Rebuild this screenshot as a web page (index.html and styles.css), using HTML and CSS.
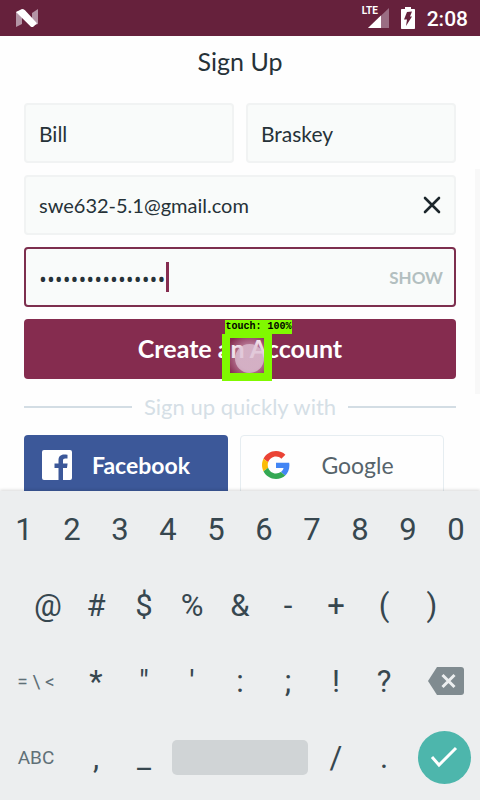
FILE: index.html
```html
<!DOCTYPE html>
<html lang="en">
<head>
<meta charset="utf-8">
<meta name="viewport" content="width=device-width, initial-scale=1">
<title>Sign Up</title>
<link rel="stylesheet" href="styles.css">
</head>
<body>
<header class="status-bar">
  <svg class="status-logo" width="22" height="18" viewBox="0 0 22 18" aria-hidden="true">
    <path fill="#b394a5" d="M0 3l6-2v14l-6 3zM16 4l6-4v15l-6 2z"/>
    <path fill="#fff" d="M0 3l6-3c1 0 2 .4 3 1.200l12 13-4 3.800c-1 .3-2 0-2.600-.8z"/>
  </svg>
  <div class="status-icons">
    <span class="signal">
      <span class="network">LTE</span>
      <svg width="21" height="20" viewBox="0 0 21 20" aria-hidden="true">
        <path fill="#9a6d83" d="M21 0v20H0z"/>
        <path fill="#fff" d="M13 7.600V20H0z"/>
      </svg>
    </span>
    <svg width="14" height="22" viewBox="0 0 14 22" aria-hidden="true">
      <path fill="#fff" d="M4 0h6v2h3c.6 0 1 .4 1 1v18c0 .6-.4 1-1 1H1c-.6 0-1-.4-1-1V3c0-.6.4-1 1-1h3z"/>
      <path fill="#66213c" d="M6 5l5-.500-2 5h2L5 19l1-6.500H3z"/>
    </svg>
    <span class="clock">2:08</span>
  </div>
</header>

<main class="content">
  <h1 class="title">Sign Up</h1>
  <form class="form">
    <div class="name-row">
      <input class="field" type="text" aria-label="First name" value="Bill">
      <input class="field" type="text" aria-label="Last name" value="Braskey">
    </div>
    <div class="field field-group">
      <input class="field-input" type="text" aria-label="Email" value="swe632-5.1@gmail.com">
      <button class="clear" type="button" aria-label="Clear email">
        <svg width="18" height="18" viewBox="0 0 18 18"><path d="M2 2l14 14M16 2L2 16" stroke="#1c262b" stroke-width="2.600" stroke-linecap="round"/></svg>
      </button>
    </div>
    <div class="field field-group is-focused">
      <input class="field-input password" type="password" aria-label="Password" value="abcdefghijklmnop">
      <span class="caret"></span>
      <button class="show" type="button">SHOW</button>
    </div>
    <button class="submit" type="button">Create an Account
      <span class="touch">
        <span class="touch-label">touch: 100%</span>
        <span class="touch-box"><span class="touch-dot"></span></span>
      </span>
    </button>
  </form>
  <div class="divider">Sign up quickly with</div>
  <div class="social">
    <button class="social-button facebook" type="button">
      <svg width="30" height="30" viewBox="0 0 30 30" aria-hidden="true">
        <path fill="#fff" d="M2 0h26a2 2 0 0 1 2 2v26a2 2 0 0 1-2 2h-7V18h4l.6-4.500H21v-3c0-1.300.6-2 2.200-2H25.500V4.800c-.7-.1-2-.2-3.300-.2-3.700 0-5.700 2.200-5.700 5.700v3.200h-4V18h4v12H2a2 2 0 0 1-2-2V2a2 2 0 0 1 2-2z"/>
      </svg>
      <span class="social-name">Facebook</span>
    </button>
    <button class="social-button google" type="button">
      <svg width="28" height="28" viewBox="0 0 48 48" aria-hidden="true">
        <path fill="#ea4335" d="M24 9.500c3.540 0 6.710 1.220 9.210 3.600l6.850-6.850C35.900 2.380 30.470 0 24 0 14.620 0 6.510 5.380 2.560 13.220l7.980 6.190C12.430 13.720 17.740 9.500 24 9.500z"/>
        <path fill="#4285f4" d="M46.980 24.550c0-1.570-.15-3.090-.38-4.550H24v9.020h12.940c-.58 2.960-2.260 5.480-4.780 7.180l7.730 6c4.510-4.180 7.090-10.360 7.090-17.650z"/>
        <path fill="#fbbc05" d="M10.530 28.590c-.48-1.450-.76-2.990-.76-4.590s.27-3.140.76-4.590l-7.980-6.190C.92 16.460 0 20.120 0 24s.92 7.540 2.560 10.780l7.970-6.190z"/>
        <path fill="#34a853" d="M24 48c6.480 0 11.930-2.130 15.890-5.810l-7.730-6c-2.150 1.450-4.920 2.300-8.160 2.300-6.260 0-11.570-4.220-13.470-9.910l-7.980 6.190C6.510 42.620 14.620 48 24 48z"/>
      </svg>
      <span class="social-name">Google</span>
    </button>
  </div>
  <span class="scrollbar"></span>
</main>

<section class="keyboard" aria-label="Keyboard">
  <div class="key-row">
    <button class="key">1</button><button class="key">2</button><button class="key">3</button><button class="key">4</button><button class="key">5</button><button class="key">6</button><button class="key">7</button><button class="key">8</button><button class="key">9</button><button class="key">0</button>
  </div>
  <div class="key-row inset">
    <button class="key">@</button><button class="key">#</button><button class="key">$</button><button class="key">%</button><button class="key">&amp;</button><button class="key">-</button><button class="key">+</button><button class="key">(</button><button class="key">)</button>
  </div>
  <div class="key-row">
    <button class="key wide">= \ &lt;</button><button class="key">*</button><button class="key">"</button><button class="key">'</button><button class="key">:</button><button class="key">;</button><button class="key">!</button><button class="key">?</button>
    <button class="key wide" aria-label="Backspace">
      <svg class="backspace" width="36" height="28" viewBox="0 0 36 28"><path fill="#808b90" d="M9 0h24a3 3 0 0 1 3 3v22a3 3 0 0 1-3 3H9L0 14z"/><path d="M14.500 8l12 12M26.500 8l-12 12" stroke="#eceeef" stroke-width="3"/></svg>
    </button>
  </div>
  <div class="key-row">
    <button class="key wide">ABC</button><button class="key">,</button><button class="key">_</button>
    <button class="key space" aria-label="Space"><span class="space-bar"></span></button>
    <button class="key">/</button><button class="key">.</button>
    <button class="key wide" aria-label="Done"><span class="done"><svg width="28" height="22" viewBox="0 0 28 22"><path d="M2 11l7 8L26 2" fill="none" stroke="#fff" stroke-width="3"/></svg></span></button>
  </div>
</section>
</body>
</html>
```
FILE: styles.css
```css
* {
  box-sizing: border-box;
}

body {
  margin: 0;
  height: 100vh;
  display: flex;
  flex-direction: column;
  background: #fefefe;
  color: #263238;
  font-family: Lato, "Liberation Sans", sans-serif;
}

button,
input {
  margin: 0;
  padding: 0;
  border: 0;
  background: none;
  color: inherit;
  font: inherit;
}

svg {
  display: block;
  flex: none;
}

/* Status bar */
.status-bar {
  flex: none;
  height: 36px;
  padding: 0 12px 0 16px;
  display: flex;
  align-items: center;
  justify-content: space-between;
  background: #66213c;
  color: #fff;
}

.status-icons {
  display: flex;
  align-items: center;
  gap: 12px;
}

.signal {
  position: relative;
  padding-left: 6px;
}

.network {
  position: absolute;
  left: 0;
  top: -2px;
  font: 700 10px/10px "Liberation Sans Narrow", Roboto, sans-serif;
}

.clock {
  padding-top: 2px;
  font: 500 21px/36px Roboto, sans-serif;
}

/* Form */
.content {
  position: relative;
  flex: 1;
  min-height: 0;
  overflow: hidden;
  padding: 0 24px;
}

.title {
  margin: 0;
  padding: 9px 0 26px;
  font-size: 25px;
  line-height: 32px;
  font-weight: 400;
  text-align: center;
}

.form {
  display: flex;
  flex-direction: column;
  gap: 12px;
}

.name-row {
  display: flex;
  gap: 12px;
}

.field {
  flex: 1 1 0;
  min-width: 0;
  height: 60px;
  padding: 0 13px;
  border: 2px solid #f1f3f3;
  border-radius: 4px;
  background: #f9fbfa;
  font-size: 21px;
}

.field-group {
  position: relative;
  flex: none;
  display: flex;
  align-items: center;
  font-size: 20px;
}

.is-focused {
  border-color: #7d2f4e;
}

.field-input {
  flex: 1;
  min-width: 0;
  height: 54px;
}

.password {
  padding-top: 4px;
  font-family: "Open Sans", sans-serif;
  font-size: 21px;
  font-weight: 500;
}

.caret {
  position: absolute;
  left: 140px;
  top: 13px;
  width: 3px;
  height: 30px;
  background: #852c4f;
}

.show {
  margin-right: -2px;
  color: #b3bfc0;
  font-size: 17px;
  font-weight: 700;
}

.submit {
  position: relative;
  height: 60px;
  padding-bottom: 2px;
  border-radius: 4px;
  background: #852c4f;
  color: #fff;
  font-size: 25px;
  font-weight: 700;
}

/* Touch indicator */
.touch {
  position: absolute;
  left: 198px;
  top: 1px;
}

.touch-label {
  display: block;
  width: 67px;
  height: 14px;
  margin-left: 3px;
  background: #80f900;
  color: #000;
  font: 700 10px/14px "Liberation Mono", monospace;
  text-align: center;
  white-space: nowrap;
}

.touch-box {
  display: block;
  width: 50px;
  height: 47px;
  padding: 6px 0 0 5px;
  border: 8px solid #80f900;
  border-top-width: 4px;
  background: radial-gradient(circle at 60% 55%, rgba(216, 170, 196, 0.6) 45%, rgba(216, 170, 196, 0) 90%);
}

.touch-dot {
  display: block;
  width: 29px;
  height: 29px;
  border-radius: 50%;
  background: rgba(224, 200, 216, 0.7);
}

.divider {
  display: flex;
  align-items: center;
  gap: 12px;
  margin: 12px 0;
  color: #d5dfe6;
  font-size: 22px;
  line-height: 32px;
}

.divider::before,
.divider::after {
  content: "";
  flex: 1;
  height: 2px;
  background: #d3dde4;
}

.social {
  display: grid;
  grid-template-columns: 1fr 1fr;
  gap: 12px;
  padding-right: 12px;
}

.social-button {
  height: 60px;
  padding: 0 18px;
  display: flex;
  align-items: center;
  border-radius: 4px;
  font-size: 23px;
}

.social-name {
  flex: 1;
}

.facebook {
  background: #3c5899;
  color: #fff;
  font-weight: 700;
}

.google {
  padding-left: 21px;
  border: 1px solid #e6edf1;
  color: #56646b;
}

.scrollbar {
  position: absolute;
  top: 133px;
  right: 0;
  width: 5px;
  height: 225px;
  background: #f8f8f8;
}

/* Keyboard */
.keyboard {
  position: relative;
  flex: none;
  padding-bottom: 5px;
  background: #eceeef;
  box-shadow: 0 -1px 3px rgba(0, 0, 0, 0.15);
  color: #37474f;
  font-family: Roboto, sans-serif;
}

.key-row {
  display: flex;
  height: 76px;
}

.inset {
  padding: 0 5%;
}

.key {
  flex: 2 1 0;
  min-width: 0;
  display: flex;
  align-items: center;
  justify-content: center;
  font-size: 31px;
}

.wide {
  flex-grow: 3;
  font-size: 19px;
  color: #607077;
}

.space {
  flex-grow: 6;
}

.space-bar {
  width: calc(100% - 8px);
  height: 35px;
  border-radius: 5px;
  background: #d0d4d6;
}

.backspace {
  margin-left: 4px;
}

.done {
  width: 53px;
  height: 53px;
  display: flex;
  align-items: center;
  justify-content: center;
  border-radius: 50%;
  background: #4db6ac;
}
```
